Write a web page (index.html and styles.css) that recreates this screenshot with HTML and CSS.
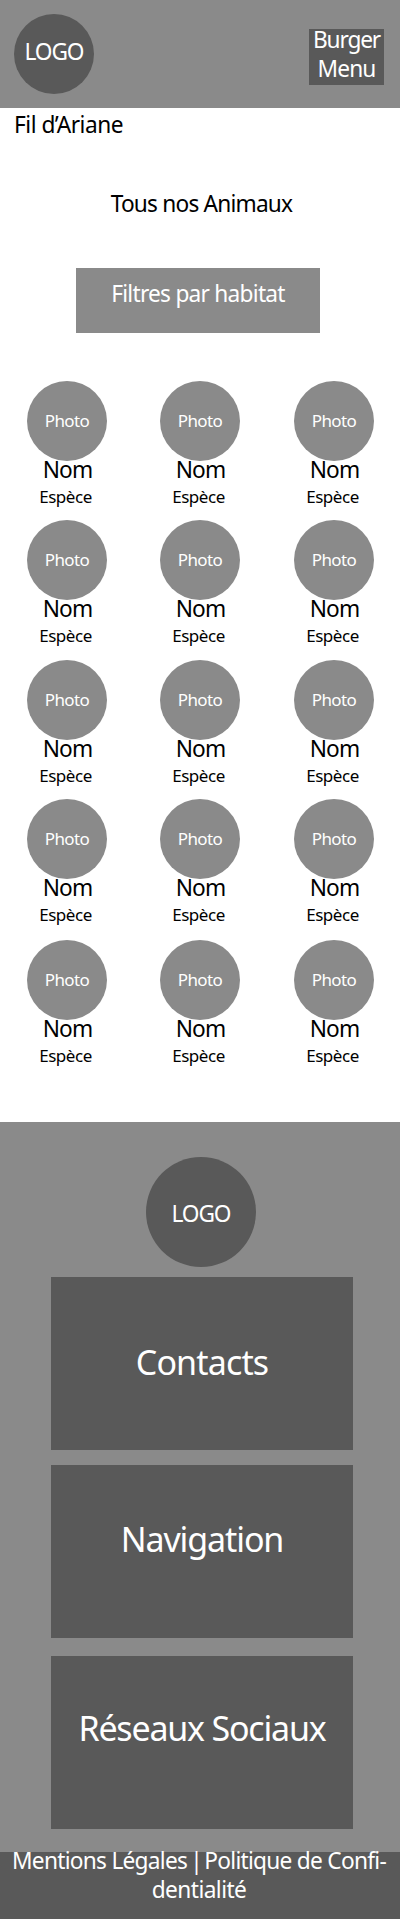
FILE: index.html
```html
<!DOCTYPE html>
<html lang="fr">
<head>
<meta charset="utf-8">
<title>Tous nos Animaux</title>
<link rel="stylesheet" href="styles.css">
</head>
<body>
<header class="header">
  <div class="logo"><span class="t-logo">LOGO</span></div>
  <button class="burger"><span class="t-burger">Burger</span><span class="t-menu">Menu</span></button>
</header>
<main>
  <nav class="crumb"><span class="t-crumb">Fil d’Ariane</span></nav>
  <h1 class="title"><span class="t-title">Tous nos Animaux</span></h1>
  <button class="filter"><span class="t-filter">Filtres par habitat</span></button>
  <section class="animals" id="animals"></section>
</main>
<footer class="footer">
  <div class="logo logo-large"><span class="t-logo">LOGO</span></div>
  <section class="panel contacts"><span class="t-contacts">Contacts</span></section>
  <section class="panel navigation"><span class="t-navigation">Navigation</span></section>
  <section class="panel social"><span class="t-social">Réseaux Sociaux</span></section>
  <div class="legal"><span class="t-legal">Mentions Légales <i class="bar">|</i> Politique de Confi-</span><span class="t-legal2">dentialité</span></div>
</footer>
<script src="script.js"></script>
</body>
</html>
```
FILE: styles.css
```css
* { box-sizing: border-box; }
body {
  margin: 0;
  background: #fff;
  color: #000;
  font: 22.7px/29px "Noto Sans", "Open Sans", sans-serif;
}
span { display: block; white-space: nowrap; }
button { border: 0; padding: 0; margin: 0; font: inherit; color: #fff; display: block; }
.header {
  display: flex;
  justify-content: space-between;
  height: 108px;
  padding: 14px 16px 0 14px;
  background: #8a8a8a;
}
.logo {
  display: flex;
  justify-content: center;
  width: 80px;
  height: 80px;
  padding-top: 23px;
  border-radius: 50%;
  background: #595959;
  color: #fff;
}
.burger {
  display: flex;
  flex-direction: column;
  align-items: center;
  width: 75px;
  height: 56px;
  margin-top: 15px;
  background: #595959;
}
.burger span { position: relative; top: -4px; }
.crumb { padding: 2px 0 0 14px; }
.title { display: flex; justify-content: center; margin: 50px 0 0 3px; font: inherit; }
.filter {
  display: flex;
  justify-content: center;
  width: 244px;
  height: 65px;
  margin: 50px 0 0 76px;
  padding-top: 11px;
  background: #8a8a8a;
}
.animals {
  display: grid;
  grid-template-columns: 133px 134px 80px;
  grid-template-rows: 139px 140px 139px 141px 182px;
  padding: 48px 0 0 27px;
}
.animal { display: flex; flex-direction: column; align-items: center; width: 80px; height: 130px; }
.photo {
  display: flex;
  justify-content: center;
  width: 80px;
  height: 80px;
  padding-top: 29px;
  border-radius: 50%;
  background: #8a8a8a;
  color: #fff;
  font-size: 17px;
  line-height: 22px;
}
.name { margin: -6px 0 0 1px; }
.species { margin: 2px 3px 0 0; font-size: 17px; line-height: 22px; }
.footer {
  display: flex;
  flex-direction: column;
  align-items: center;
  height: 797px;
  padding-top: 35px;
  background: #8a8a8a;
  color: #fff;
}
.logo-large { width: 110px; height: 110px; padding-top: 42px; margin: 0 0 10px 2px; }
.panel {
  display: flex;
  justify-content: center;
  width: 302px;
  height: 173px;
  margin-left: 4px;
  background: #595959;
  font-size: 34px;
  line-height: 44px;
}
.contacts { padding-top: 63px; }
.navigation { padding-top: 52px; margin-top: 15px; }
.social { padding-top: 50px; margin-top: 18px; }
.legal {
  display: flex;
  flex-direction: column;
  align-items: center;
  width: 100%;
  height: 67px;
  margin-top: 23px;
  background: #595959;
}
.legal span { position: relative; top: -6px; left: -1px; }
.bar { font-style: normal; margin: 0 -3px 0 -2px; }
.t-logo { letter-spacing: -1.1px; }
.t-burger { letter-spacing: -1.2px; }
.t-menu { letter-spacing: -0.9px; }
.t-crumb { letter-spacing: -0.5px; }
.t-title { letter-spacing: -0.8px; }
.t-filter { letter-spacing: -0.75px; }
.t-photo { letter-spacing: -0.6px; }
.name { letter-spacing: -0.9px; }
.species { letter-spacing: -0.45px; }
.t-contacts { letter-spacing: -0.85px; }
.t-navigation { letter-spacing: -1.1px; }
.t-social { letter-spacing: -1.2px; }
.t-legal { letter-spacing: -0.73px; }
.t-legal2 { letter-spacing: -0.55px; }
```
FILE: script.js
```js
const list = document.getElementById('animals');
for (let i = 0; i < 15; i++) {
  const card = document.createElement('article');
  card.className = 'animal';
  card.innerHTML = '<div class="photo"><span class="t-photo">Photo</span></div><span class="name">Nom</span><span class="species">Espèce</span>';
  list.append(card);
}
```
